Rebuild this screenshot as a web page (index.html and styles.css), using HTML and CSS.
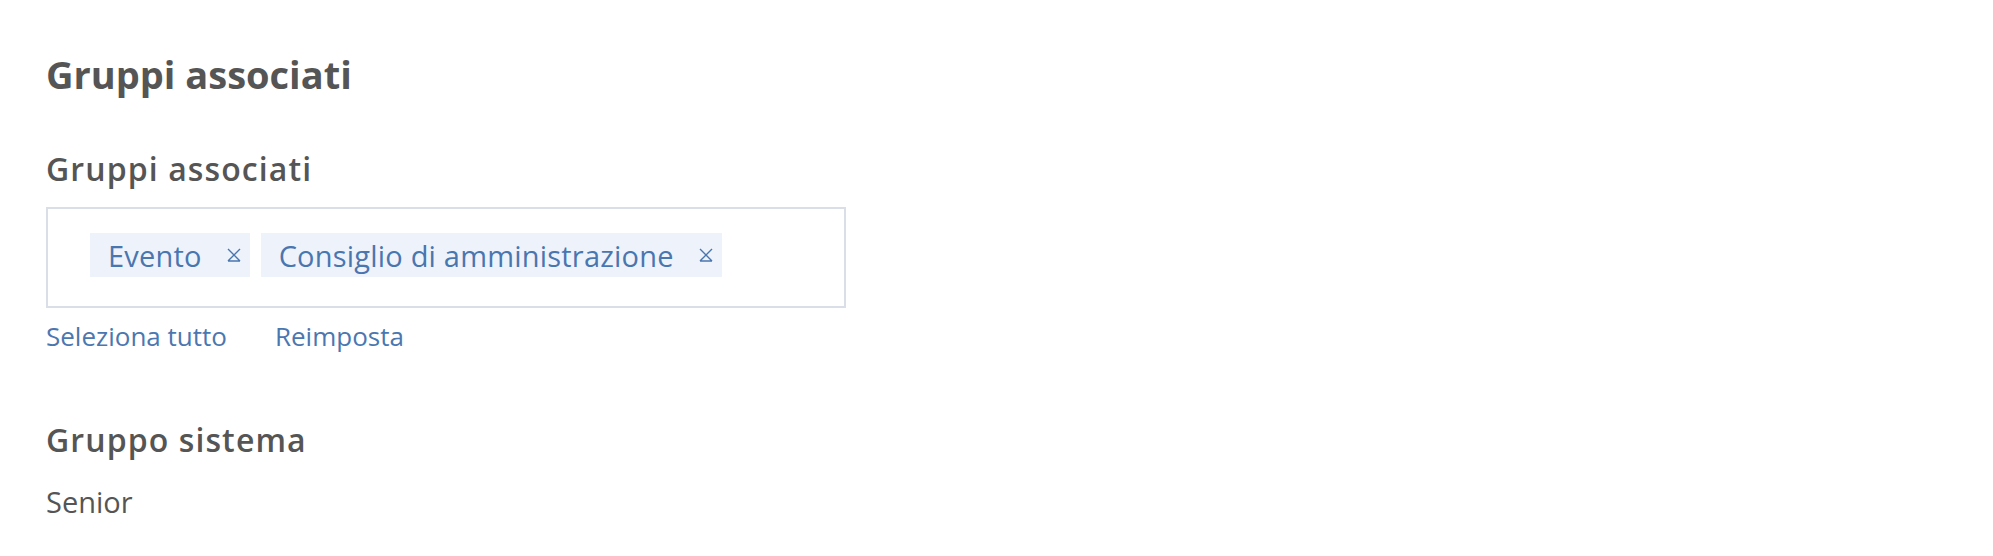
FILE: index.html
```html
<!DOCTYPE html>
<html lang="it">

<head>
    <meta charset="UTF-8">
    <meta name="viewport" content="width=device-width, initial-scale=1.0">
    <title>Gruppi associati</title>
    <link rel="stylesheet" href="styles.css">
</head>

<body>
    <div class="panel">
        <h2 class="panelTitle">Gruppi associati</h2>

        <h3 class="fieldLabel">Gruppi associati</h3>
        <div class="tagBox">
            <span class="tag">Evento
                <svg class="tagClose" viewBox="0 0 16 16"><path d="M2 2 L14 14 M14 2 L2 14 M2 14 H14" /></svg>
            </span>
            <span class="tag">Consiglio di amministrazione
                <svg class="tagClose" viewBox="0 0 16 16"><path d="M2 2 L14 14 M14 2 L2 14 M2 14 H14" /></svg>
            </span>
        </div>
        <div class="tagActions">
            <a href="#" class="link">Seleziona tutto</a>
            <a href="#" class="link">Reimposta</a>
        </div>

        <h3 class="fieldLabel sysLabel">Gruppo sistema</h3>
        <p class="fieldValue">Senior</p>
    </div>
</body>

</html>
```

FILE: styles.css
```css
body {
    margin: 0;
    font-family: "Open Sans", "Noto Sans", sans-serif;
    color: #555555;
    background: #ffffff;
}

.panel {
    padding: 0 46px;
}

.panelTitle {
    margin: 51px 0 0 0;
    font-size: 38px;
    line-height: 46px;
    font-weight: 700;
}

.fieldLabel {
    margin: 54px 0 0 0;
    font-size: 32px;
    line-height: 36px;
    font-weight: 600;
    letter-spacing: 1.1px;
}

.tagBox {
    margin-top: 20px;
    width: 800px;
    height: 101px;
    box-sizing: border-box;
    border: 2px solid #d9dee7;
    padding: 24px 42px 0 42px;
    display: flex;
    align-items: flex-start;
    gap: 11px;
}

.tag {
    display: flex;
    align-items: center;
    height: 44px;
    padding: 0 8px 0 18px;
    background: #eef3fb;
    color: #4a76b0;
    font-size: 29px;
    letter-spacing: 0.2px;
    gap: 24px;
}

.tagClose {
    width: 16px;
    height: 16px;
    fill: none;
    stroke: #4a76b0;
    stroke-width: 1.4;
}

.tagActions {
    display: flex;
    gap: 48px;
    margin-top: 12px;
}

.link {
    color: #4b77b0;
    text-decoration: none;
    font-size: 26px;
    line-height: 32px;
}

.sysLabel {
    margin-top: 70px;
}

.fieldValue {
    margin: 26px 0 0 0;
    font-size: 29px;
    line-height: 36px;
}
```
